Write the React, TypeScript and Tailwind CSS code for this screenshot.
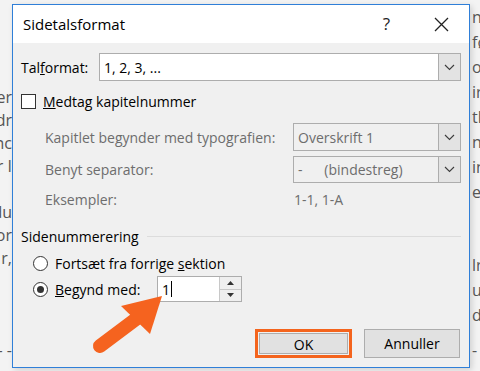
const leftTop = ["er", "dr", "nc", "r I", "", "du", "or", "r,"];
const rightTop = ["n", "fø", "or", "ir", "tli", "ne", "in", "er"];
const rightBottom = ["lr", "ut", "du"];

function Chevron() {
  return (
    <svg width="11" height="7" viewBox="0 0 11 7">
      <path d="M1 1 L5.5 5.5 L10 1" fill="none" stroke="#3c3c3c" strokeWidth="1.1" />
    </svg>
  );
}

function Combo({ value, width, disabled }: { value: string; width: string; disabled?: boolean }) {
  return (
    <div
      className={`flex h-full ${width} border border-[#adadad] ${disabled ? "bg-[#f0f0f0] text-[#6d6d6d]" : "bg-white text-black"}`}
    >
      <div className="flex-1 flex items-center pl-[4px] whitespace-pre">{value}</div>
      <div className="w-[22px] flex items-center justify-center bg-[#e3e3e3] border-l border-[#adadad]">
        <Chevron />
      </div>
    </div>
  );
}

function Radio({ checked }: { checked?: boolean }) {
  return (
    <div className="w-[15px] h-[15px] rounded-full border border-[#333] bg-white flex items-center justify-center">
      {checked && <div className="w-[7px] h-[7px] rounded-full bg-[#333]" />}
    </div>
  );
}

export default function App() {
  return (
    <div className="relative w-[480px] h-[371px] overflow-hidden bg-[#f3f3f3] flex font-['Open_Sans',sans-serif] text-[14px]">
      <div className="w-[12px] overflow-hidden flex flex-col items-end text-[16px] text-[#555]">
        <div className="h-[86px] shrink-0" />
        {leftTop.map((l, i) => (
          <div key={i} className="h-[23px] leading-[23px] whitespace-pre">{l}</div>
        ))}
        <div className="h-[69px] shrink-0" />
        <div className="leading-[23px] whitespace-pre">- - -</div>
      </div>

      <div className="mt-[4px] w-[458px] h-[364px] border border-[#2f7fd8] bg-[#f0f0f0] flex flex-col shadow-[2px_2px_6px_rgba(0,0,0,0.15)]">
        <div className="h-[38px] bg-white flex items-center pl-[10px] pr-[20px]">
          <span className="text-[15px] text-black flex-1">Sidetalsformat</span>
          <span className="text-[17px] text-[#222] mr-[44px]">?</span>
          <svg width="15" height="15" viewBox="0 0 15 15">
            <path d="M1 1 L14 14 M14 1 L1 14" stroke="#222" strokeWidth="1.3" />
          </svg>
        </div>

        <div className="flex-1 flex flex-col pl-[8px] pr-[8px] pb-[9px]">
          <div className="mt-[10px] h-[28px] flex items-center">
            <span className="w-[78px] text-black">
              Tal<span className="underline">f</span>ormat:
            </span>
            <Combo value="1, 2, 3, ..." width="flex-1" />
          </div>

          <div className="mt-[11px] h-[19px] flex items-center gap-[7px]">
            <div className="w-[15px] h-[15px] border border-[#333] bg-white" />
            <span className="text-black">
              <span className="underline">M</span>edtag kapitelnummer
            </span>
          </div>

          <div className="mt-[12px] h-[28px] flex items-center pl-[24px] text-[#6d6d6d]">
            <span className="flex-1">Kapitlet begynder med typografien:</span>
            <Combo value="Overskrift 1" width="w-[168px]" disabled />
          </div>

          <div className="mt-[5px] h-[27px] flex items-center pl-[24px] text-[#6d6d6d]">
            <span className="flex-1">Benyt separator:</span>
            <Combo value={"-      (bindestreg)"} width="w-[168px]" disabled />
          </div>

          <div className="mt-[7px] h-[18px] flex items-center pl-[24px] text-[#6d6d6d]">
            <span className="flex-1">Eksempler:</span>
            <span className="w-[168px] pl-[1px]">1-1, 1-A</span>
          </div>

          <div className="mt-[19px] h-[18px] flex items-center gap-[8px]">
            <span className="text-black">Sidenummerering</span>
            <div className="flex-1 h-px bg-[#dcdcdc]" />
          </div>

          <div className="mt-[9px] h-[18px] flex items-center pl-[12px] gap-[7px]">
            <Radio />
            <span className="text-black">
              Fortsæt fra forrige <span className="underline">s</span>ektion
            </span>
          </div>

          <div className="mt-[4px] h-[26px] flex items-center pl-[12px] gap-[7px]">
            <Radio checked />
            <span className="text-black w-[95px]">
              <span className="underline">B</span>egynd med:
            </span>
            <div className="h-full w-[85px] flex border border-[#adadad] bg-white">
              <div className="flex-1 flex items-center pl-[4px] text-black">
                1<span className="ml-px w-px h-[16px] bg-black" />
              </div>
              <div className="w-[22px] flex flex-col border-l border-[#c8c8c8] bg-[#efefef]">
                <div className="flex-1 flex items-center justify-center border-b border-[#c8c8c8]">
                  <svg width="7" height="4" viewBox="0 0 7 4"><path d="M0 4 L3.5 0 L7 4 Z" fill="#333" /></svg>
                </div>
                <div className="flex-1 flex items-center justify-center">
                  <svg width="7" height="4" viewBox="0 0 7 4"><path d="M0 0 L3.5 4 L7 0 Z" fill="#333" /></svg>
                </div>
              </div>
            </div>
          </div>

          <div className="mt-auto flex justify-end gap-[12px] pr-[1px]">
            <div className="w-[97px] h-[29px] border-[3px] border-[#f4641d] p-px bg-[#f0f0f0]">
              <button className="w-full h-full bg-[#e1e1e1] border border-[#adadad] text-black">OK</button>
            </div>
            <button className="w-[96px] h-[29px] bg-[#e1e1e1] border border-[#adadad] text-black">Annuller</button>
          </div>
        </div>
      </div>

      <div className="flex-1 overflow-hidden flex flex-col pl-[2px] text-[16px] text-[#555]">
        <div className="h-[5px] shrink-0" />
        {rightTop.map((l, i) => (
          <div key={i} className="h-[25px] leading-[25px] whitespace-pre">{l}</div>
        ))}
        <div className="h-[48px] shrink-0" />
        {rightBottom.map((l, i) => (
          <div key={i} className="h-[25px] leading-[25px] whitespace-pre">{l}</div>
        ))}
        <div className="h-[10px] shrink-0" />
        <div className="leading-[25px] whitespace-pre">- -</div>
      </div>

      <svg className="absolute left-0 top-0 pointer-events-none" width="480" height="371">
        <path d="M100 346 L136 319" stroke="#f5631f" strokeWidth="14" strokeLinecap="round" />
        <path d="M162 296 L121 306 L150 334 Z" fill="#f5631f" />
      </svg>
    </div>
  );
}
